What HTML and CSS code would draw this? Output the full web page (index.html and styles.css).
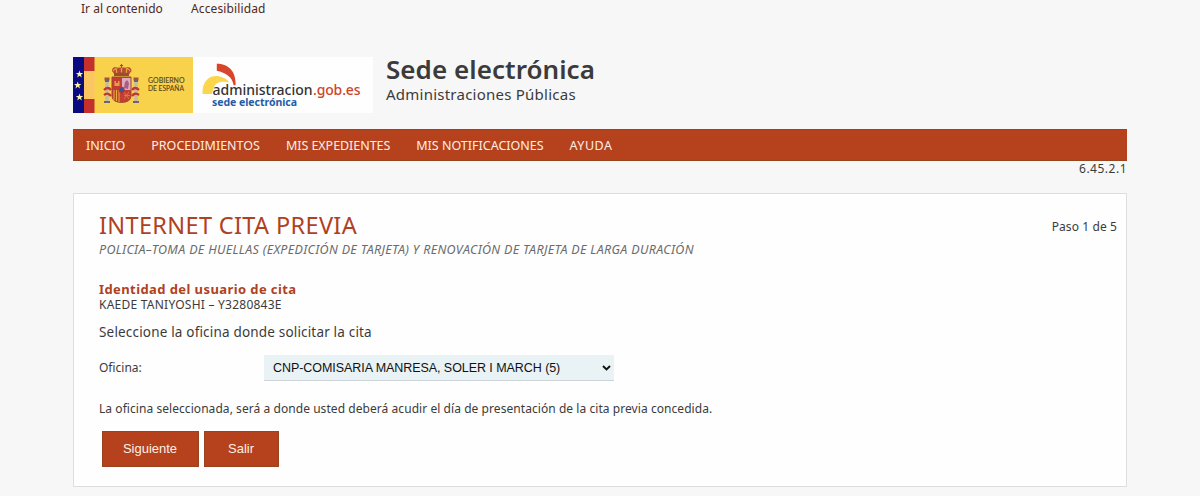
FILE: index.html
```html
<!DOCTYPE html>
<html lang="es">
    <head>
        <meta charset="UTF-8">
        <meta name="viewport" content="width=device-width, initial-scale=1.0"/>
        <title>Sede electrónica - Internet cita previa</title>
        <link rel="stylesheet" href="styles.css">
    </head>
    <body>
        <div class="wrapper">
            <div class="skip-links">
                <a class="skip-content" href="#contenido">Ir al contenido</a>
                <a class="skip-access" href="#">Accesibilidad</a>
            </div>

            <header class="header">
                <svg class="logo" width="300" height="56" viewBox="0 0 300 56" role="img" aria-label="Gobierno de España - administracion.gob.es">
                    <rect width="300" height="56" fill="#fefefe"/>
                    <rect width="120" height="56" fill="#f9d24c"/>
                    <!-- banderas -->
                    <rect width="11" height="56" fill="#0b0b80"/>
                    <rect x="11" width="10.500" height="14" fill="#c4302b"/>
                    <rect x="11" y="14" width="10.500" height="28" fill="#fbc562"/>
                    <rect x="11" y="42" width="10.500" height="14" fill="#c4302b"/>
                    <g fill="#fdf3a0">
                        <path id="star" d="M6.500 13.500l.9 2.600h2.800l-2.200 1.700.8 2.600-2.300-1.600-2.300 1.600.8-2.600-2.200-1.700h2.800z"/>
                        <use href="#star" x="-1.800" y="11"/>
                        <use href="#star" x="0" y="23"/>
                    </g>
                    <!-- escudo -->
                    <g>
                        <path d="M39 14c0-5 4-4 9.500-4s10-1 10 4l-3 4H42z" fill="#b94a35"/>
                        <path d="M40 14c2-3 5-4 8.500-4s7 1 8.500 4M44 17l-1-6M48.500 17V9M53 17l1-6" fill="none" stroke="#e4a840" stroke-width="1.200"/>
                        <path d="M48.500 7v4M47 8.500h3" stroke="#a34b28"/>
                        <path d="M41 16.500q7.500-2 15 0v2.500H41z" fill="#9c4d2a"/>
                        <path d="M34 24v20M63 24v20" stroke="#c9b9a2" stroke-width="3.500"/>
                        <path d="M31.500 20.500h5v3h-5zM60.500 20.500h5v3h-5z" fill="#a5533b"/>
                        <path d="M32 24h4M61 24h4M31 45h6M60 45h6" stroke="#6b6378" stroke-width="2"/>
                        <path d="M31 33q4-4 7 0M31 38q4-3 7 1M66 33q-4-4-7 0M66 38q-4-3-7 1" fill="none" stroke="#c0392b" stroke-width="2.300"/>
                        <path d="M39 20h19v19q0 6-9.500 6.500Q39 45 39 39z" fill="#c53b35" stroke="#a04a2c"/>
                        <path d="M49 21h8.500v12H49z" fill="#d9aebd"/>
                        <path d="M51 31l1-6 2-2 2 3-1 6z" fill="#ad5a85"/>
                        <path d="M41.500 29v-5h1.500v2h2v-2h1.500v5z" fill="#e6a13f"/>
                        <path d="M41 33v10M43.500 33v11M46 33v12" stroke="#e8b23c"/>
                        <path d="M51 35l5 7M56 35l-5 7M51 38.500h6" stroke="#d88a38" stroke-width=".8"/>
                        <ellipse cx="48.700" cy="33" rx="2.600" ry="3" fill="#4d4c91" stroke="#b53832"/>
                    </g>
                    <g class="logo-gov">
                        <text x="75" y="26.200" textLength="36.500" lengthAdjust="spacingAndGlyphs">GOBIERNO</text>
                        <text x="75" y="33.800" textLength="36" lengthAdjust="spacingAndGlyphs">DE ESPAÑA</text>
                    </g>
                    <!-- administracion.gob.es -->
                    <path d="M129.700 37c-.8-7 2-14 8-17 6-2.500 14-.5 19 5.500-8-2-14 0-15.500 4l-2.500 7.500z" fill="#fbd54b"/>
                    <path d="M143.800 6.700c11 0 19.500 7 18.800 21.500h-2c-1-8-8-12.700-16.800-14.500z" fill="#d8452a"/>
                    <text class="logo-name" x="139.500" y="37.500" textLength="100">administracion</text>
                    <text class="logo-name logo-gob" x="240" y="37.500" textLength="47.500">.gob.es</text>
                    <text class="logo-sede" x="139" y="49" textLength="85">sede electrónica</text>
                </svg>
                <div class="titles">
                    <h1 class="site-title">Sede electrónica</h1>
                    <p class="site-subtitle">Administraciones Públicas</p>
                </div>
            </header>

            <nav class="menu">
                <a class="m-inicio" href="#">INICIO</a>
                <a class="m-proc" href="#">PROCEDIMIENTOS</a>
                <a class="m-exp" href="#">MIS EXPEDIENTES</a>
                <a class="m-notif" href="#">MIS NOTIFICACIONES</a>
                <a class="m-ayuda" href="#">AYUDA</a>
            </nav>
            <div class="version">6.45.2.1</div>

            <main id="contenido" class="content">
                <div class="content-head">
                    <h2 class="page-title">INTERNET CITA PREVIA</h2>
                    <span class="step">Paso 1 de 5</span>
                </div>
                <p class="procedure">POLICIA–TOMA DE HUELLAS (EXPEDICIÓN DE TARJETA) Y RENOVACIÓN DE TARJETA DE LARGA DURACIÓN</p>

                <h3 class="identity-title">Identidad del usuario de cita</h3>
                <p class="identity">KAEDE TANIYOSHI – Y3280843E</p>

                <form>
                    <p class="instruction">Seleccione la oficina donde solicitar la cita</p>
                    <div class="field">
                        <label for="oficina">Oficina:</label>
                        <div class="select-box">
                            <select id="oficina">
                                <option>CNP-COMISARIA MANRESA, SOLER I MARCH (5)</option>
                            </select>
                            <svg class="arrow" width="9" height="6" viewBox="0 0 9 6"><path d="M1 1l3.500 3.500L8 1" fill="none" stroke="#111" stroke-width="1.900"/></svg>
                        </div>
                    </div>
                    <p class="note">La oficina seleccionada, será a donde usted deberá acudir el día de presentación de la cita previa concedida.</p>
                    <div class="buttons">
                        <button type="button" class="btn btn-next">Siguiente</button>
                        <button type="button" class="btn btn-exit">Salir</button>
                    </div>
                </form>
            </main>
        </div>
    </body>
</html>
```
FILE: styles.css
```css
*
{
    box-sizing: border-box;
}

body
{
    margin: 0;
    background: #f7f7f7;
    color: #3b3b3b;
    font-family: "Noto Sans", "Open Sans", sans-serif;
    font-size: 12px;
    line-height: 16px;
}

h1, h2, h3, p
{
    margin: 0;
}

a
{
    color: inherit;
    text-decoration: none;
}

.wrapper
{
    width: 1054px;
    margin: 0 auto;
}

/* cabecera */
.skip-links
{
    display: flex;
    gap: 28px;
    height: 57px;
    padding: 1px 0 0 8px;
    color: #4e2a1c;
}

.skip-content
{
    width: 82px;
}

.skip-access
{
    letter-spacing: .12px;
}

.header
{
    display: flex;
    height: 72px;
}

.logo
{
    display: block;
}

.logo-gov
{
    font: 500 6.6px Lato, sans-serif;
    fill: #5d4a1c;
    stroke: #5d4a1c;
    stroke-width: .1px;
}

.logo-name
{
    font: 500 14px "Noto Sans", sans-serif;
    fill: #333;
}

.logo-gob
{
    fill: #d0452a;
}

.logo-sede
{
    font: bold 10.5px "Noto Sans", sans-serif;
    fill: #1f5ca8;
}

.titles
{
    padding-left: 13px;
}

.site-title
{
    height: 28px;
    font-size: 26px;
    font-weight: 600;
    line-height: 24px;
    letter-spacing: .05px;
}

.site-subtitle
{
    font-size: 15px;
    line-height: 19px;
    letter-spacing: .24px;
}

.menu
{
    display: flex;
    gap: 26px;
    height: 32px;
    padding-left: 13px;
    border: 1px solid #98441f;
    border-width: 1px 0;
    background: #b5421d;
    color: #fdeee6;
    font-size: 12.5px;
    line-height: 32px;
}

.m-inicio
{
    letter-spacing: -.1px;
}

.m-exp
{
    letter-spacing: -.05px;
}

.m-ayuda
{
    letter-spacing: .5px;
}

.version
{
    height: 32px;
    letter-spacing: .5px;
    text-align: right;
}

/* contenido */
.content
{
    height: 294px;
    padding: 18px 9px 0 25px;
    border: 1px solid #dedede;
    background: #fefefe;
}

.content-head
{
    display: flex;
    justify-content: space-between;
    height: 30px;
}

.page-title
{
    color: #b0411f;
    font-size: 23.5px;
    font-weight: normal;
    line-height: 26px;
    letter-spacing: .35px;
}

.step
{
    line-height: 30px;
    letter-spacing: .1px;
}

.procedure
{
    color: #6b6b6b;
    font-size: 12.5px;
    font-style: italic;
    letter-spacing: .33px;
}

.identity-title
{
    margin-top: 23px;
    color: #b0411f;
    font-size: 13px;
    font-weight: bold;
    line-height: 16px;
    letter-spacing: .41px;
}

.identity
{
    margin-top: 1px;
    line-height: 14px;
    letter-spacing: .24px;
}

.instruction
{
    margin-top: 11px;
    font-size: 13.5px;
    line-height: 18px;
    letter-spacing: .18px;
}

.field
{
    display: flex;
    margin-top: 14px;
}

.field label
{
    width: 165px;
    line-height: 25px;
}

.select-box
{
    position: relative;
    width: 350px;
}

.select-box select
{
    display: block;
    width: 350px;
    height: 26px;
    padding: 0 0 0 9px;
    border: 0;
    border-bottom: 1px solid #cdd3da;
    border-radius: 0;
    background: #e9f2f5;
    color: #111;
    font: 12.5px "Liberation Sans", sans-serif;
    letter-spacing: -.06px;
    -webkit-appearance: none;
    appearance: none;
}

.arrow
{
    position: absolute;
    top: 10px;
    right: 3px;
    pointer-events: none;
}

.note
{
    margin-top: 20px;
    letter-spacing: .06px;
}

.buttons
{
    display: flex;
    gap: 5px;
    margin: 14px 0 0 3px;
}

.btn
{
    height: 36px;
    padding: 0 1px 2px 0;
    border: 1px solid #98441f;
    background: #b5421d;
    color: #fdeee6;
    font: 13px "Liberation Sans", sans-serif;
}

.btn-next
{
    width: 97px;
}

.btn-exit
{
    width: 75px;
}
```
